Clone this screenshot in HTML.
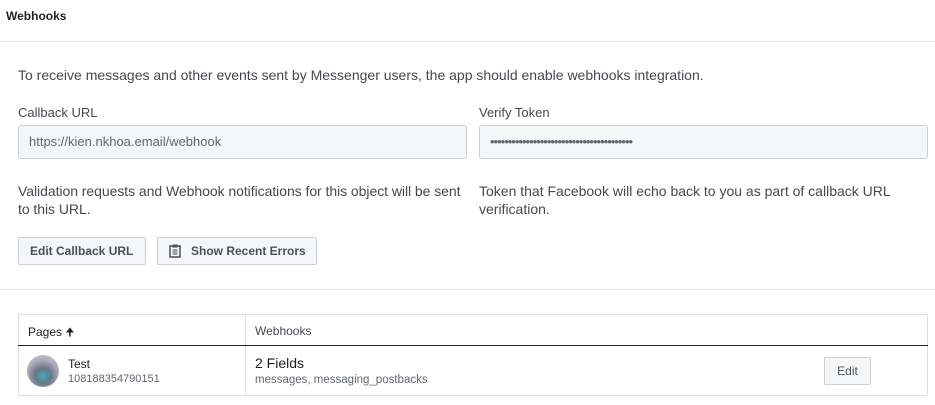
<!DOCTYPE html><html><head><style>
body{margin:0;width:935px;height:405px;background:#fff;font-family:"Liberation Sans",sans-serif;color:#1c1e21;position:relative;overflow:hidden}
.a{position:absolute;white-space:nowrap}
.t{font-size:14px;color:#444950}
.inp{position:absolute;top:125px;height:34px;background:#f5f6f7;border:1px solid #ccd0d5;border-radius:3px;box-sizing:border-box;font-size:13px;color:#606770;line-height:32px;padding-left:10px}
.btn{position:absolute;top:237px;height:28px;background:#f5f6f7;border:1px solid #ccd0d5;border-radius:2px;box-sizing:border-box;font-size:12px;font-weight:bold;color:#4b4f56;line-height:26px}
.hr{position:absolute;left:0;width:935px;height:1px;background:#dddfe2}
</style></head><body>
<div class="a" style="left:6px;top:9px;font-size:12px;font-weight:bold;color:#1d2129">Webhooks</div>
<div class="hr" style="top:41px"></div>
<div class="a t" style="left:18px;top:67px">To receive messages and other events sent by Messenger users, the app should enable webhooks integration.</div>
<div class="a t" style="left:18px;top:105px;font-size:13px">Callback URL</div>
<div class="a t" style="left:479px;top:105px;font-size:13px">Verify Token</div>
<div class="inp" style="left:18px;width:449px">https://kien.nkhoa.email/webhook</div>
<div class="inp" style="left:479px;width:449px;letter-spacing:-1px">••••••••••••••••••••••••••••••••••••••••</div>
<div class="a t" style="left:18px;top:182px;font-size:14px;line-height:18px;letter-spacing:-0.05px">Validation requests and Webhook notifications for this object will be sent<br>to this URL.</div>
<div class="a t" style="left:479px;top:182px;font-size:14px;line-height:18px">Token that Facebook will echo back to you as part of callback URL<br>verification.</div>
<div class="btn" style="left:18px;width:128px;padding-left:11px">Edit Callback URL</div>
<div class="btn" style="left:157px;width:160px;padding-left:33px">Show Recent Errors
<svg style="position:absolute;left:11px;top:6px" width="12" height="14" viewBox="0 0 12 14"><rect x="1" y="2" width="10" height="11" fill="none" stroke="#4b4f56" stroke-width="1.5"/><rect x="3.5" y="0.5" width="5" height="3" fill="#4b4f56"/><path d="M3.5 6h5M3.5 8h5M3.5 10h5" stroke="#4b4f56"/></svg></div>
<div class="hr" style="top:289px"></div>
<div style="position:absolute;left:18px;top:314px;width:910px;height:82px;border:1px solid #dddfe2;box-sizing:border-box"></div>
<div style="position:absolute;left:245px;top:314px;width:1px;height:82px;background:#dddfe2"></div>
<div style="position:absolute;left:18px;top:345px;width:910px;height:1px;background:#1c1e21"></div>
<div class="a" style="left:28px;top:324px;font-size:12px">Pages <span style="font-size:11px">&#129033;</span></div>
<div class="a" style="left:255px;top:324px;font-size:12px;color:#444950">Webhooks</div>
<div style="position:absolute;left:27px;top:355px;width:32px;height:32px;border-radius:50%;background:radial-gradient(circle at 50% 65%,#4ab 0,#678 30%,#aab 60%,#ccd 100%)"></div>
<div class="a" style="left:68px;top:357px;font-size:12px;color:#1c1e21">Test</div>
<div class="a" style="left:68px;top:373px;font-size:11px;color:#606770">108188354790151</div>
<div class="a" style="left:255px;top:355px;font-size:14px">2 Fields</div>
<div class="a" style="left:255px;top:374px;font-size:11.5px;color:#606770">messages, messaging_postbacks</div>
<div style="position:absolute;left:824px;top:357px;width:47px;height:28px;background:#f5f6f7;border:1px solid #ccd0d5;border-radius:2px;box-sizing:border-box;font-size:12px;color:#4b4f56;text-align:center;line-height:26px">Edit</div>
</body></html>
